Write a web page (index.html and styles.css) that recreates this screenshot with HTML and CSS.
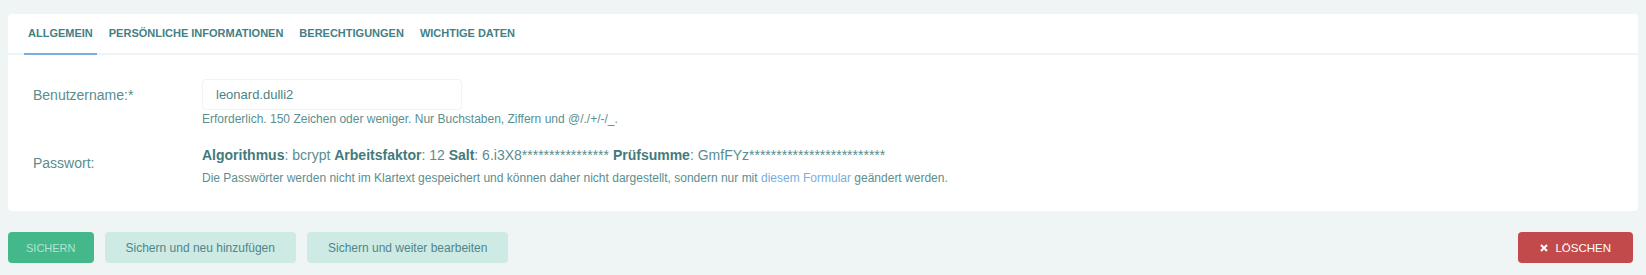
FILE: index.html
```html
<!DOCTYPE html>
<html lang="de">
  <head>
    <meta charset="UTF-8" />
    <meta name="viewport" content="width=device-width, initial-scale=1.0" />
    <title>Benutzer ändern</title>
    <link rel="stylesheet" href="styles.css">
  </head>
  <body>
    <div class="card">
      <ul class="tabs">
        <li class="tab active">Allgemein</li>
        <li class="tab">Persönliche Informationen</li>
        <li class="tab">Berechtigungen</li>
        <li class="tab">Wichtige Daten</li>
      </ul>
      <div class="form">
        <div class="form-row">
          <label class="field-label" for="username">Benutzername:*</label>
          <div class="field">
            <input type="text" id="username" value="leonard.dulli2" />
            <p class="help">Erforderlich. 150 Zeichen oder weniger. Nur Buchstaben, Ziffern und @/./+/-/_.</p>
          </div>
        </div>
        <div class="form-row row-password">
          <span class="field-label">Passwort:</span>
          <div class="field">
            <p class="hash"><b>Algorithmus</b>: bcrypt <b>Arbeitsfaktor</b>: 12 <b>Salt</b>: 6.i3X8**************** <b>Prüfsumme</b>: GmfFYz*************************</p>
            <p class="help">Die Passwörter werden nicht im Klartext gespeichert und können daher nicht dargestellt, sondern nur mit <a href="#">diesem Formular</a> geändert werden.</p>
          </div>
        </div>
      </div>
    </div>
    <div class="actions">
      <button class="btn btn-save">Sichern</button>
      <button class="btn btn-light">Sichern und neu hinzufügen</button>
      <button class="btn btn-light">Sichern und weiter bearbeiten</button>
      <button class="btn btn-delete">
        <svg width="8" height="8" viewBox="0 0 8 8"><path d="M1 1L7 7M7 1L1 7" stroke="#fff" stroke-width="2" /></svg>
        Löschen
      </button>
    </div>
  </body>
</html>
```

FILE: styles.css
```css
body {
  font-family: "Liberation Sans", Arial, sans-serif;
  background-color: #eff5f5;
  margin: 0;
  padding: 14px 8px 8px;
  color: #588c8e;
}
.card {
  background: white;
  border-radius: 4px;
}
.tabs {
  display: flex;
  gap: 8px;
  list-style: none;
  margin: 0;
  padding: 0 16px;
  border-bottom: 2px solid #eef4f4;
}
.tab {
  padding: 0 4px;
  height: 39px;
  line-height: 39px;
  font-size: 11px;
  font-weight: bold;
  text-transform: uppercase;
  color: #437f86;
  margin-bottom: -2px;
  border-bottom: 2px solid transparent;
}
.tab.active {
  border-bottom-color: #79aee0;
}
.form {
  padding: 24px 25px 25px;
}
.form-row {
  display: flex;
}
.row-password {
  margin-top: 19px;
}
.field-label {
  width: 169px;
  flex-shrink: 0;
  font-size: 14px;
  line-height: 18px;
  padding-top: 7px;
  color: #5a8d8f;
}
.row-password .field-label {
  padding-top: 8px;
}
input {
  width: 260px;
  height: 31px;
  box-sizing: border-box;
  padding: 0 13px;
  font-family: inherit;
  font-size: 13px;
  color: #4b8486;
  border: 1px solid #eef3f3;
  border-radius: 4px;
  outline: none;
}
.help {
  margin: 1px 0 0;
  font-size: 12px;
  line-height: 16px;
  color: #5a8f90;
}
.hash {
  margin: 0;
  font-size: 14px;
  line-height: 18px;
  color: #5a8d8f;
}
.hash b {
  color: #437a7d;
}
.row-password .help {
  margin-top: 6px;
}
.help a {
  color: #79aee0;
  text-decoration: none;
}
.actions {
  display: flex;
  gap: 11px;
  margin-top: 21px;
  padding-right: 5px;
}
.btn {
  height: 31px;
  padding: 0 21px;
  border: none;
  border-radius: 4px;
  font-family: "Liberation Sans", Arial, sans-serif;
  font-size: 12px;
  cursor: pointer;
}
.btn-save {
  padding: 0 18px;
  background-color: #44b78b;
  color: #b4e4cf;
  font-size: 11px;
  text-transform: uppercase;
}
.btn-light {
  background-color: #cdeae4;
  color: #4f8689;
}
.btn-delete {
  margin-left: auto;
  padding: 0 22px;
  background-color: #c24a4a;
  color: white;
  font-size: 11.5px;
  text-transform: uppercase;
  display: flex;
  align-items: center;
  gap: 7px;
}
```
